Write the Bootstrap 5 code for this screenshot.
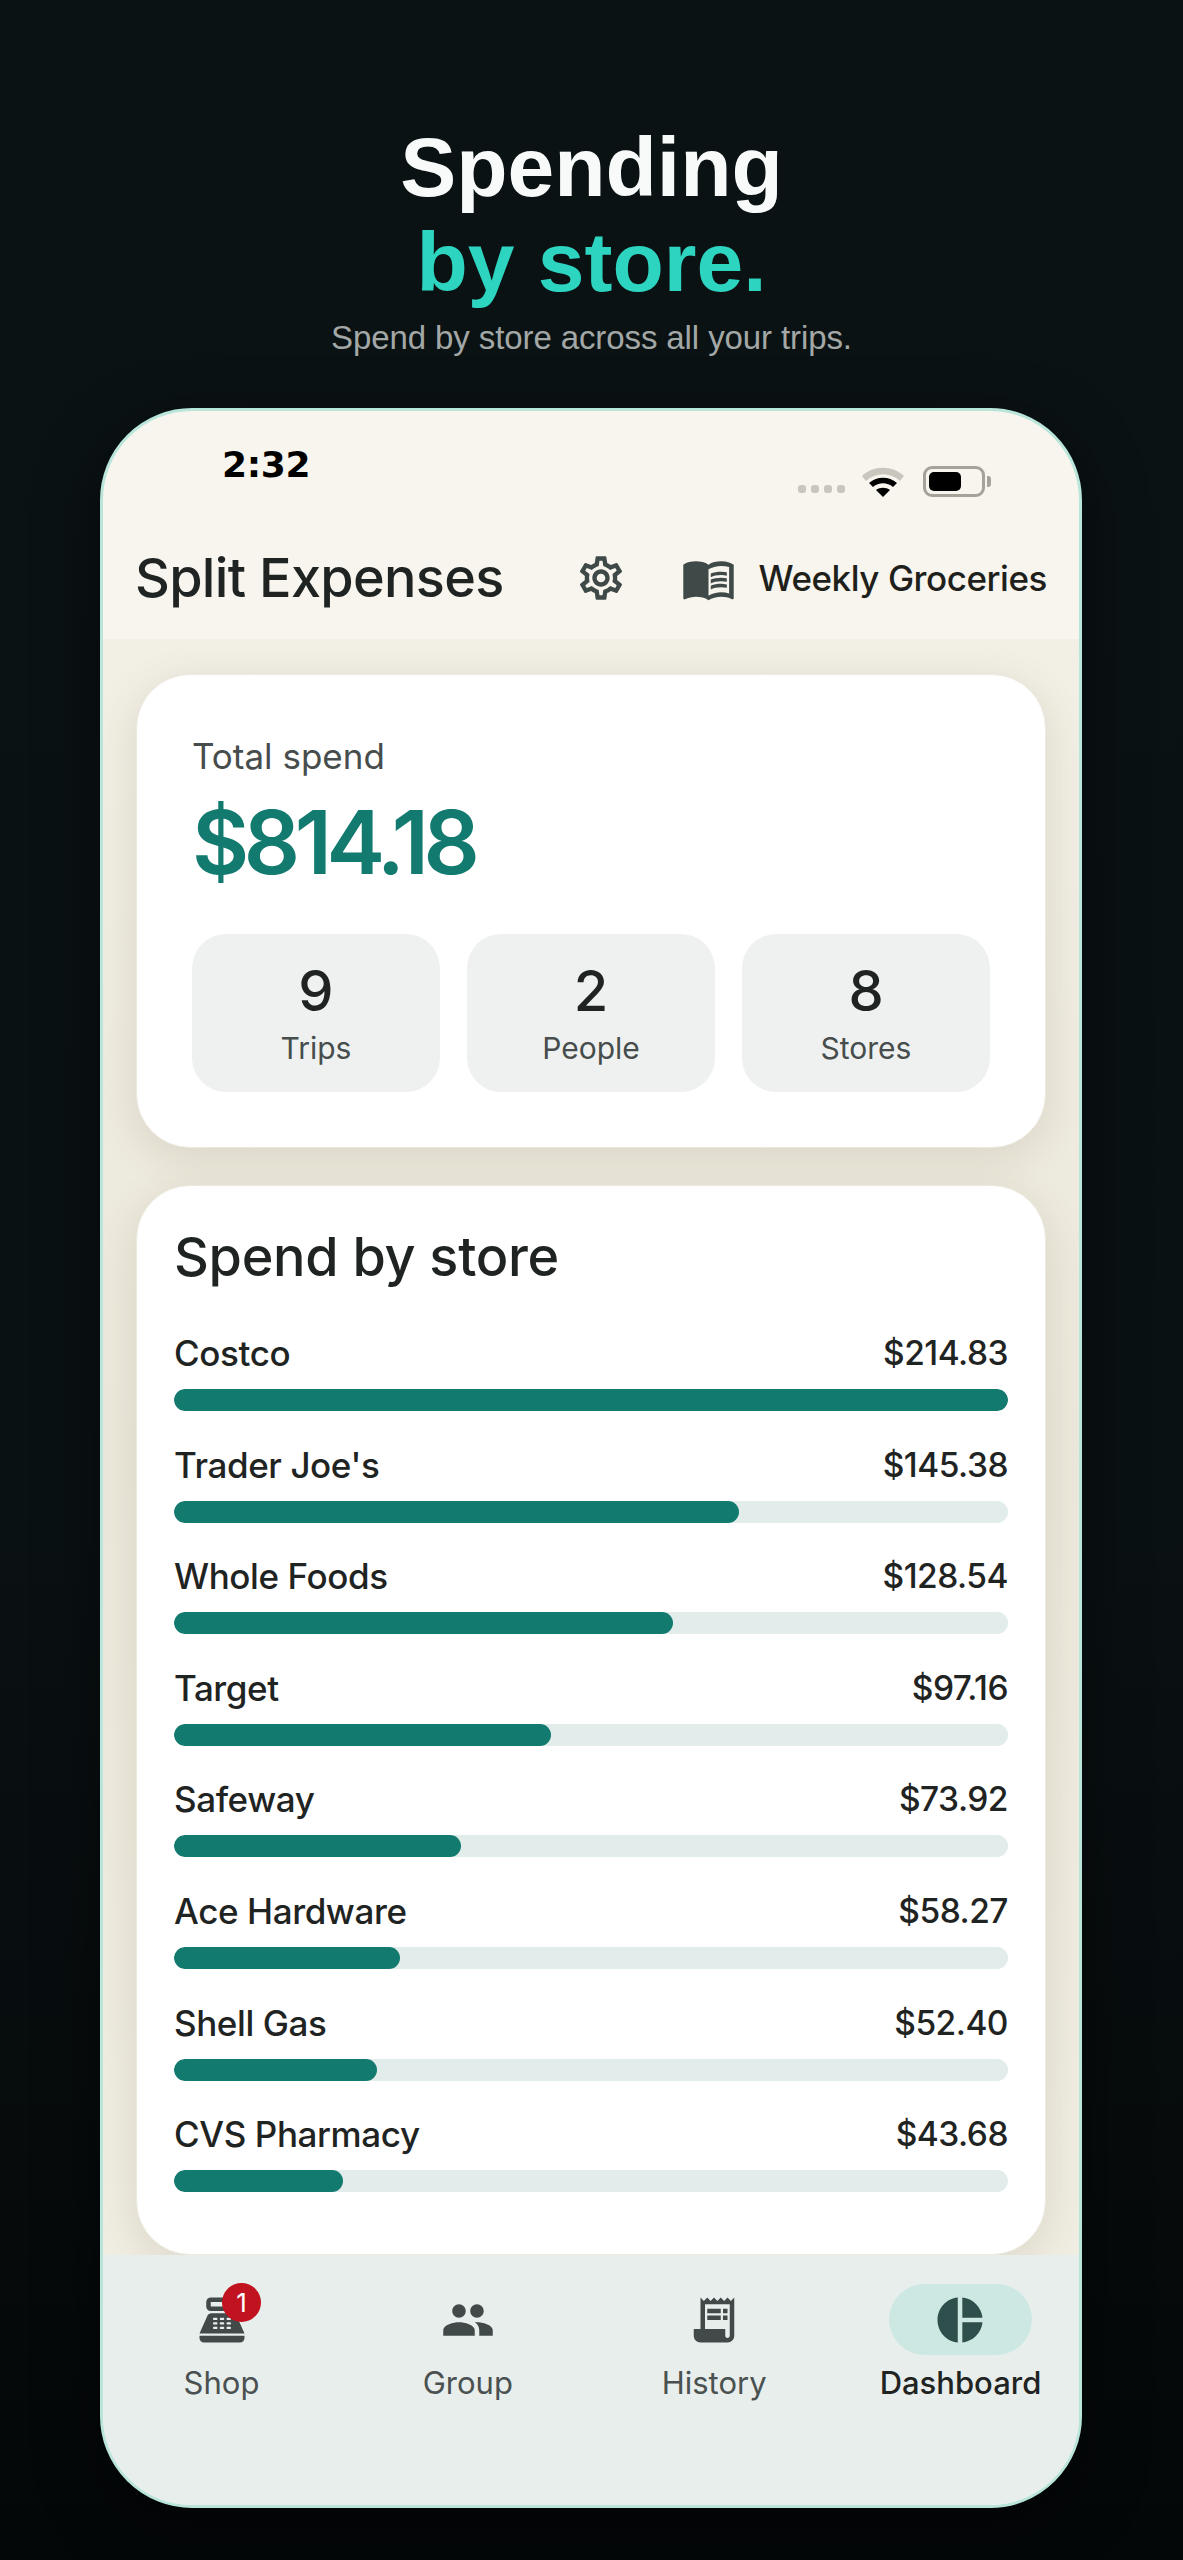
<!DOCTYPE html>
<html lang="en">

<head>
  <meta charset="UTF-8" />
  <meta name="viewport" content="width=device-width, initial-scale=1" />
  <title>Spending by store</title>
  <link href="https://cdn.jsdelivr.net/npm/bootstrap@5.3.3/dist/css/bootstrap.min.css" rel="stylesheet">
  <style>
    body { background: linear-gradient(#0a1214, #0a1113 60%, #040708); height: 2560px; overflow: hidden; font-family: "Inter", sans-serif; }
    .promo { padding-top: 120px; height: 408px; }
    .promo-title { font-family: "Liberation Sans", sans-serif; font-weight: 700; font-size: 84px; line-height: 95px; color: #f7faf9; margin: 0; }
    .promo-title span { color: #2dd4bf; display: block; }
    .promo-sub { font-family: "Liberation Sans", sans-serif; font-size: 33px; line-height: 40px; letter-spacing: -.1px; color: #a3a8a6; margin: 8px 0 0; }
    .phone { width: 982px; height: 2100px; margin-left: 100px; border: 3px solid #b9e5db; border-radius: 92px; overflow: hidden; background: #f7f5ee; box-shadow: 0 20px 60px rgba(0, 0, 0, .5); }
    .status-row { height: 110px; padding: 0 88px 0 119px; }
    .status-time { font-family: "DejaVu Sans", sans-serif; font-weight: 700; font-size: 36px; line-height: 46px; letter-spacing: -.3px; margin-top: 31px; color: #000; }
    .status-icons { margin-top: 54px; height: 32px; }
    .sig-dots { gap: 5px; }
    .sig-dot { width: 8px; height: 8px; border-radius: 3px; background: #c9c6be; }
    .batt { width: 62px; height: 31px; border: 3px solid #a5a29a; border-radius: 9px; padding: 3px; margin-left: 18px; }
    .batt-fill { width: 32px; height: 100%; background: #000; border-radius: 5px; }
    .batt-cap { width: 4px; height: 11px; background: #a5a29a; border-radius: 0 3px 3px 0; margin-left: 2px; }
    .app-head { height: 118px; padding: 0 32px 4px 32px; }
    .app-title { font-size: 54px; font-weight: 500; letter-spacing: -.7px; color: #1f2423; margin: 0; }
    .group-name { font-size: 35px; font-weight: 500; letter-spacing: -.45px; color: #1f1f1c; }
    .head-icon { fill: #3f4a48; }
    .gear-icon { margin-right: 54px; }
    .book-icon { margin-right: 23px; }
    .app-main { height: 1616px; padding: 35px 33px 0; background: linear-gradient(#f2efe5, #ece8db 50%, #f0ede2); overflow: hidden; }
    .sheet { border: 1px solid #ece9df; border-radius: 54px; background: #fff; box-shadow: 0 10px 40px rgba(90, 80, 50, .14); }
    .total-sheet { height: 474px; padding: 59px 55px 0; margin-bottom: 37px; }
    .total-label { font-size: 35px; line-height: 44px; color: #464d4c; }
    .total-value { font-size: 88px; line-height: 104px; font-weight: 600; letter-spacing: -5.4px; color: #127a6f; margin-top: 12px; }
    .stat-row { margin-top: 40px; }
    .stat-box { width: 248px; height: 158px; border-radius: 34px; background: #eff1f0; gap: 6px; }
    .stat-num { font-size: 56px; line-height: 64px; color: #1f2423; font-weight: 500; }
    .stat-name { font-size: 30px; line-height: 38px; color: #464d4c; }
    .store-sheet { height: 1070px; padding: 38px 37px; border-radius: 54px; }
    .store-title { font-size: 54px; line-height: 66px; font-weight: 500; letter-spacing: -.3px; color: #1f2423; margin: 0 0 38px; }
    .store-row { height: 111.6px; padding-top: 3px; }
    .store-text { font-size: 35px; line-height: 44px; font-weight: 500; letter-spacing: -.4px; color: #1f2423; margin-bottom: 14px; }
    .store-amt { font-size: 33.5px; letter-spacing: -.5px; }
    .store-track { height: 22px; border-radius: 11px; background: #e2edeb; }
    .store-track .progress-bar { background: #127a6f; border-radius: 11px; }
    .tab-bar { height: 250px; background: #e8eeec; padding: 29px 47px 0; }
    .tab-item { width: 143px; }
    .tab-pill { width: 143px; height: 71px; flex: none; border-radius: 36px; }
    .tab-pill.is-on { background: #cde8e3; }
    .tab-icon { width: 54px; height: 54px; fill: #414a49; }
    .is-on .tab-icon { fill: #2f4f4c; }
    .tab-name { font-size: 31px; line-height: 40px; color: #4a5150; margin-top: 8px; white-space: nowrap; }
    .tab-name.is-on-text { color: #1f2423; font-weight: 500; }
    .cart-badge { position: absolute; top: -1px; left: 72px; width: 39px; height: 39px; border-radius: 50%; background: #c1121f; color: #fff; font-size: 26px; line-height: 39px; text-align: center; }
  </style>
</head>

<body>

  <header class="promo text-center">
    <h1 class="promo-title">Spending<span>by store.</span></h1>
    <p class="promo-sub">Spend by store across all your trips.</p>
  </header>

  <div class="phone d-flex flex-column">
    <div class="status-row d-flex justify-content-between align-items-start">
      <div class="status-time">2:32</div>
      <div class="status-icons d-flex align-items-center">
        <div class="sig-dots d-flex align-items-center me-3 mt-3">
          <span class="sig-dot"></span><span class="sig-dot"></span><span class="sig-dot"></span><span class="sig-dot"></span>
        </div>
        <svg width="44" height="32" viewBox="0 0 44 32">
          <path d="M1 11C12 0 32 0 43 11l-4 5C29 7 15 7 5 16z" fill="#c9c6be" />
          <path d="M8 18c8-7 20-7 28 0l-4 4c-6-5-14-5-20 0z" fill="#000" />
          <path d="M15 25c4-3 10-3 14 0l-7 7z" fill="#000" />
        </svg>
        <div class="batt"><div class="batt-fill"></div></div>
        <div class="batt-cap"></div>
      </div>
    </div>

    <div class="app-head d-flex align-items-center justify-content-between">
      <h2 class="app-title">Split Expenses</h2>
      <div class="d-flex align-items-center">
        <svg class="head-icon gear-icon" width="52" height="52" viewBox="0 0 24 24"><path d="M19.43 12.98c.04-.32.07-.64.07-.98 0-.34-.03-.66-.07-.98l2.11-1.65c.19-.15.24-.42.12-.64l-2-3.46c-.09-.16-.26-.25-.44-.25-.06 0-.12.01-.17.03l-2.49 1c-.52-.4-1.08-.73-1.69-.98l-.38-2.65C14.46 2.18 14.25 2 14 2h-4c-.25 0-.46.18-.49.42l-.38 2.65c-.61.25-1.17.59-1.69.98l-2.49-1c-.06-.02-.12-.03-.18-.03-.17 0-.34.09-.43.25l-2 3.46c-.13.22-.07.49.12.64l2.11 1.65c-.04.32-.07.65-.07.98 0 .33.03.66.07.98l-2.11 1.65c-.19.15-.24.42-.12.64l2 3.46c.09.16.26.25.44.25.06 0 .12-.01.17-.03l2.49-1c.52.4 1.08.73 1.69.98l.38 2.65c.03.24.24.42.49.42h4c.25 0 .46-.18.49-.42l.38-2.65c.61-.25 1.17-.59 1.69-.98l2.49 1c.06.02.12.03.18.03.17 0 .34-.09.43-.25l2-3.46c.12-.22.07-.49-.12-.64l-2.11-1.65zm-1.98-1.71c.04.31.05.52.05.73 0 .21-.02.43-.05.73l-.14 1.13.89.7 1.08.84-.7 1.21-1.27-.51-1.04-.42-.9.68c-.43.32-.84.56-1.25.73l-1.06.43-.16 1.13-.2 1.35h-1.4l-.19-1.35-.16-1.13-1.06-.43c-.43-.18-.83-.41-1.23-.71l-.91-.7-1.06.43-1.27.51-.7-1.21 1.08-.84.89-.7-.14-1.13c-.03-.31-.05-.54-.05-.74s.02-.43.05-.73l.14-1.13-.89-.7-1.08-.84.7-1.21 1.27.51 1.04.42.9-.68c.43-.32.84-.56 1.25-.73l1.06-.43.16-1.13.2-1.35h1.39l.19 1.35.16 1.13 1.06.43c.43.18.83.41 1.23.71l.91.7 1.06-.43 1.27-.51.7 1.21-1.07.85-.89.7.14 1.13zM12 8c-2.21 0-4 1.79-4 4s1.79 4 4 4 4-1.79 4-4-1.79-4-4-4zm0 6c-1.1 0-2-.9-2-2s.9-2 2-2 2 .9 2 2-.9 2-2 2z"/></svg>
        <svg class="head-icon book-icon" width="55" height="55" viewBox="0 0 24 24"><path d="M21 5c-1.11-.35-2.33-.5-3.5-.5-1.95 0-4.05.4-5.5 1.5-1.45-1.1-3.55-1.5-5.5-1.5S2.45 4.9 1 6v14.65c0 .25.25.5.5.5.1 0 .15-.05.25-.05C3.1 20.45 5.05 20 6.5 20c1.95 0 4.05.4 5.5 1.5 1.35-.85 3.8-1.5 5.5-1.5 1.65 0 3.35.3 4.75 1.05.1.05.15.05.25.05.25 0 .5-.25.5-.5V6c-.6-.45-1.25-.75-2-1zm0 13.5c-1.1-.35-2.3-.5-3.5-.5-1.7 0-4.15.65-5.5 1.5V8c1.35-.85 3.8-1.5 5.5-1.5 1.2 0 2.4.15 3.5.5v11.5z"/><path d="M17.5 10.5c.88 0 1.73.09 2.5.26V9.24c-.79-.15-1.64-.24-2.5-.24-1.7 0-3.24.29-4.5.83v1.66c1.13-.64 2.7-.99 4.5-.99zM13 12.49v1.66c1.13-.64 2.7-.99 4.5-.99.88 0 1.73.09 2.5.26V11.9c-.79-.15-1.64-.24-2.5-.24-1.7 0-3.24.3-4.5.83zM17.5 14.33c-1.7 0-3.24.29-4.5.83v1.66c1.13-.64 2.7-.99 4.5-.99.88 0 1.73.09 2.5.26v-1.52c-.79-.16-1.64-.24-2.5-.24z"/></svg>
        <span class="group-name">Weekly Groceries</span>
      </div>
    </div>

    <main class="app-main">
      <section class="sheet total-sheet">
        <div class="total-label">Total spend</div>
        <div class="total-value">$814.18</div>
        <div class="stat-row d-flex justify-content-between">
          <div class="stat-box d-flex flex-column align-items-center justify-content-center"><div class="stat-num">9</div><div class="stat-name">Trips</div></div>
          <div class="stat-box d-flex flex-column align-items-center justify-content-center"><div class="stat-num">2</div><div class="stat-name">People</div></div>
          <div class="stat-box d-flex flex-column align-items-center justify-content-center"><div class="stat-num">8</div><div class="stat-name">Stores</div></div>
        </div>
      </section>

      <section class="sheet store-sheet">
        <h3 class="store-title">Spend by store</h3>
        <div class="store-row">
          <div class="store-text d-flex justify-content-between"><span>Costco</span><span class="store-amt">$214.83</span></div>
          <div class="progress store-track"><div class="progress-bar" style="width:100%"></div></div>
        </div>
        <div class="store-row">
          <div class="store-text d-flex justify-content-between"><span>Trader Joe's</span><span class="store-amt">$145.38</span></div>
          <div class="progress store-track"><div class="progress-bar" style="width:67.7%"></div></div>
        </div>
        <div class="store-row">
          <div class="store-text d-flex justify-content-between"><span>Whole Foods</span><span class="store-amt">$128.54</span></div>
          <div class="progress store-track"><div class="progress-bar" style="width:59.8%"></div></div>
        </div>
        <div class="store-row">
          <div class="store-text d-flex justify-content-between"><span>Target</span><span class="store-amt">$97.16</span></div>
          <div class="progress store-track"><div class="progress-bar" style="width:45.2%"></div></div>
        </div>
        <div class="store-row">
          <div class="store-text d-flex justify-content-between"><span>Safeway</span><span class="store-amt">$73.92</span></div>
          <div class="progress store-track"><div class="progress-bar" style="width:34.4%"></div></div>
        </div>
        <div class="store-row">
          <div class="store-text d-flex justify-content-between"><span>Ace Hardware</span><span class="store-amt">$58.27</span></div>
          <div class="progress store-track"><div class="progress-bar" style="width:27.1%"></div></div>
        </div>
        <div class="store-row">
          <div class="store-text d-flex justify-content-between"><span>Shell Gas</span><span class="store-amt">$52.40</span></div>
          <div class="progress store-track"><div class="progress-bar" style="width:24.4%"></div></div>
        </div>
        <div class="store-row">
          <div class="store-text d-flex justify-content-between"><span>CVS Pharmacy</span><span class="store-amt">$43.68</span></div>
          <div class="progress store-track"><div class="progress-bar" style="width:20.3%"></div></div>
        </div>
      </section>
    </main>

    <nav class="tab-bar d-flex justify-content-between">
      <div class="tab-item d-flex flex-column align-items-center">
        <div class="tab-pill position-relative d-flex align-items-center justify-content-center">
          <svg class="tab-icon" viewBox="0 0 24 24"><path d="M17 2H7c-1.1 0-2 .9-2 2v2c0 1.1.9 2 2 2h10c1.1 0 2-.9 2-2V4c0-1.1-.9-2-2-2zm0 4H7V4h10v2zm3 16H4c-1.1 0-2-.9-2-2v-1h20v1c0 1.1-.9 2-2 2zm-1.47-11.81C18.21 9.47 17.49 9 16.7 9H7.3c-.79 0-1.51.47-1.83 1.19L2 18h20l-3.47-7.81zM9.5 16h-1c-.28 0-.5-.22-.5-.5s.22-.5.5-.5h1c.28 0 .5.22.5.5s-.22.5-.5.5zm0-2h-1c-.28 0-.5-.22-.5-.5s.22-.5.5-.5h1c.28 0 .5.22.5.5s-.22.5-.5.5zm0-2h-1c-.28 0-.5-.22-.5-.5s.22-.5.5-.5h1c.28 0 .5.22.5.5s-.22.5-.5.5zm3 4h-1c-.28 0-.5-.22-.5-.5s.22-.5.5-.5h1c.28 0 .5.22.5.5s-.22.5-.5.5zm0-2h-1c-.28 0-.5-.22-.5-.5s.22-.5.5-.5h1c.28 0 .5.22.5.5s-.22.5-.5.5zm0-2h-1c-.28 0-.5-.22-.5-.5s.22-.5.5-.5h1c.28 0 .5.22.5.5s-.22.5-.5.5zm3 4h-1c-.28 0-.5-.22-.5-.5s.22-.5.5-.5h1c.28 0 .5.22.5.5s-.22.5-.5.5zm0-2h-1c-.28 0-.5-.22-.5-.5s.22-.5.5-.5h1c.28 0 .5.22.5.5s-.22.5-.5.5zm0-2h-1c-.28 0-.5-.22-.5-.5s.22-.5.5-.5h1c.28 0 .5.22.5.5s-.22.5-.5.5z"/></svg>
          <span class="cart-badge">1</span>
        </div>
        <div class="tab-name">Shop</div>
      </div>
      <div class="tab-item d-flex flex-column align-items-center">
        <div class="tab-pill d-flex align-items-center justify-content-center">
          <svg class="tab-icon" viewBox="0 0 24 24"><path d="M16 11c1.66 0 2.99-1.34 2.99-3S17.66 5 16 5c-1.66 0-3 1.34-3 3s1.34 3 3 3zm-8 0c1.66 0 2.99-1.34 2.99-3S9.66 5 8 5C6.34 5 5 6.34 5 8s1.34 3 3 3zm0 2c-2.33 0-7 1.17-7 3.5V19h14v-2.5c0-2.33-4.67-3.5-7-3.5zm8 0c-.29 0-.62.02-.97.05 1.16.84 1.97 1.97 1.97 3.45V19h6v-2.5c0-2.33-4.67-3.5-7-3.5z"/></svg>
        </div>
        <div class="tab-name">Group</div>
      </div>
      <div class="tab-item d-flex flex-column align-items-center">
        <div class="tab-pill d-flex align-items-center justify-content-center">
          <svg class="tab-icon" viewBox="0 0 24 24"><path d="M19.5 3.5 18 2l-1.5 1.5L15 2l-1.5 1.5L12 2l-1.5 1.5L9 2 7.5 3.5 6 2v14H3v3c0 1.66 1.34 3 3 3h12c1.66 0 3-1.34 3-3V2l-1.5 1.5zM19 19c0 .55-.45 1-1 1s-1-.45-1-1v-3H8V5h11v14z"/><path d="M9 7h6v2H9zm7 0h2v2h-2zm-7 3h6v2H9zm7 0h2v2h-2z"/></svg>
        </div>
        <div class="tab-name">History</div>
      </div>
      <div class="tab-item d-flex flex-column align-items-center">
        <div class="tab-pill is-on d-flex align-items-center justify-content-center">
          <svg class="tab-icon" viewBox="0 0 24 24"><path d="M11 2v20c-5.07-.5-9-4.79-9-10s3.93-9.5 9-10zm2.03 0v8.99H22c-.47-4.74-4.24-8.52-8.97-8.99zm0 11.01V22c4.74-.47 8.5-4.25 8.97-8.99h-8.97z"/></svg>
        </div>
        <div class="tab-name is-on-text">Dashboard</div>
      </div>
    </nav>
  </div>

  <script src="https://cdn.jsdelivr.net/npm/bootstrap@5.3.3/dist/js/bootstrap.bundle.min.js"></script>
</body>

</html>
